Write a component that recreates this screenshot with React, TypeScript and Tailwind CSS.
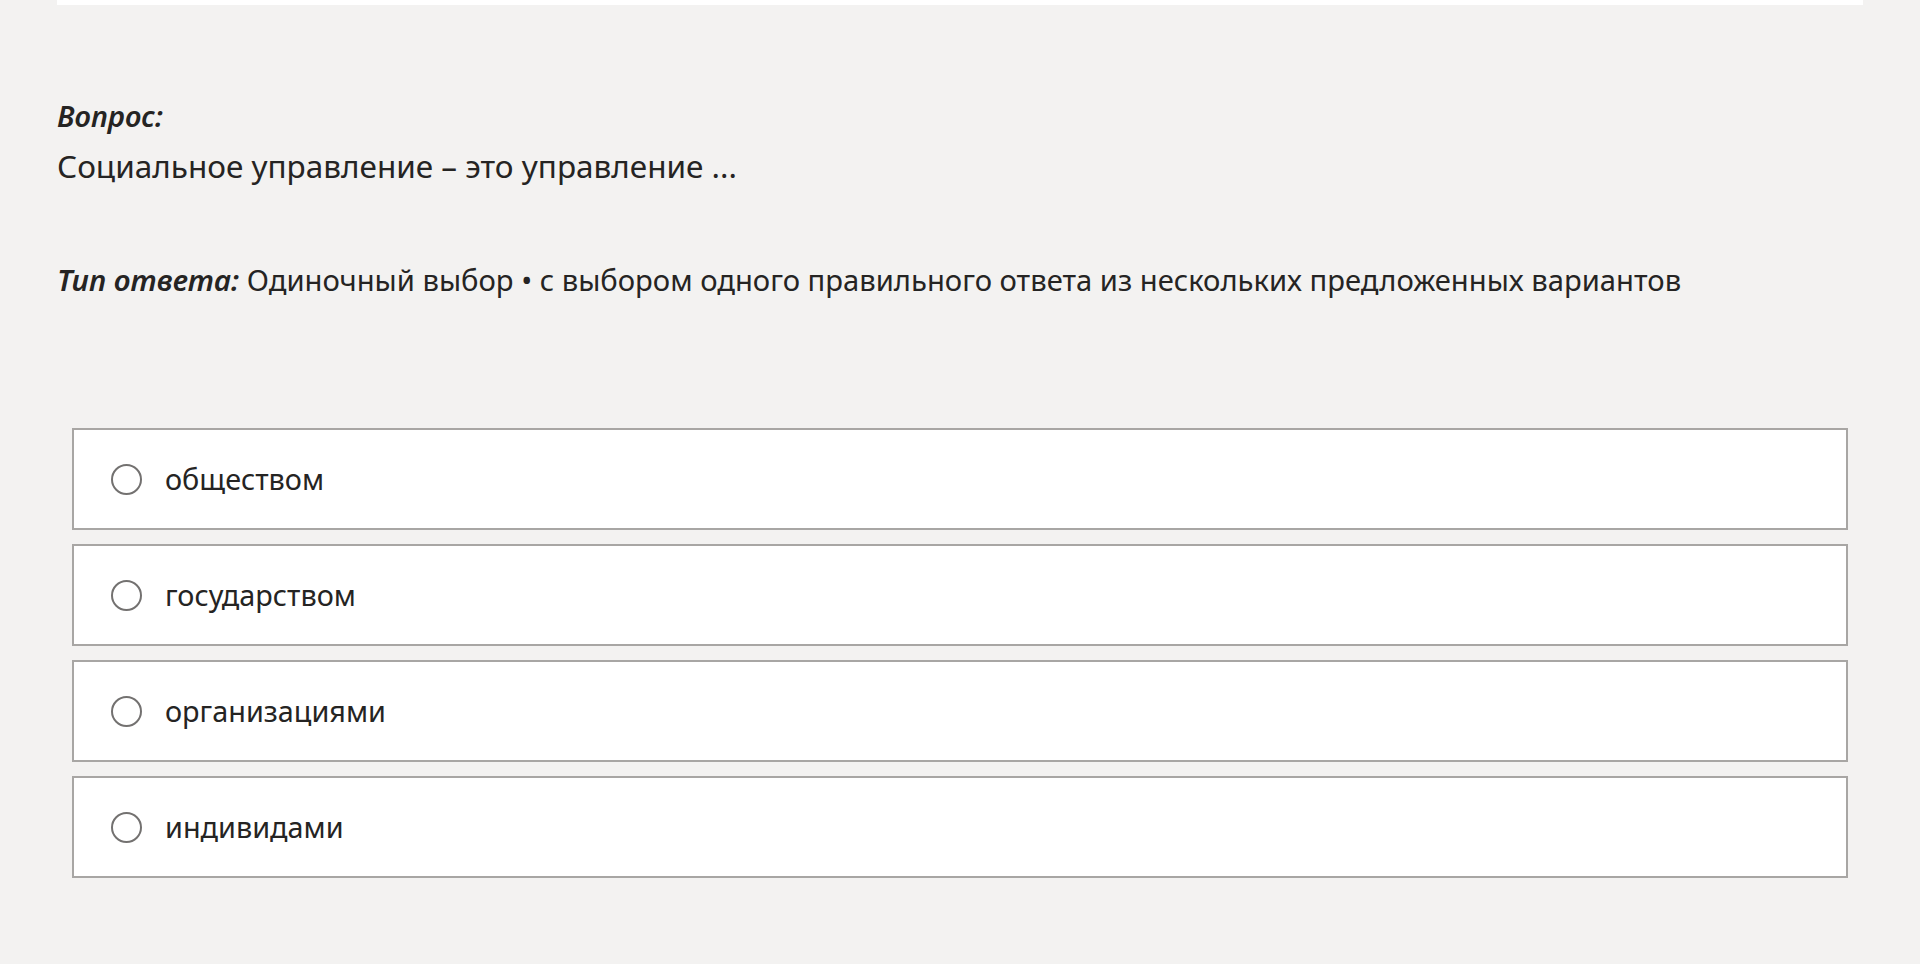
import { useState } from 'react';

const options = ['обществом', 'государством', 'организациями', 'индивидами'];

export default function App() {
    const [selected, setSelected] = useState<number | null>(null);

    return (
        <div
            className="min-h-screen bg-[#f3f2f1] text-[#252423]"
            style={{ fontFamily: '"Noto Sans", "Open Sans", sans-serif' }}
        >
            <div className="mx-[57px]">
                {/* Previous card edge */}
                <div className="h-[5px] bg-white" />

                {/* Question */}
                <div className="pt-[93px]">
                    <p className="text-[29px] leading-[36px] font-semibold italic">Вопрос:</p>
                    <p className="mt-[12px] text-[31.5px] leading-[40px]">Социальное управление – это управление ...</p>
                </div>

                {/* Answer type */}
                <p className="mt-[74px] text-[29.2px] leading-[40px]">
                    <span className="text-[29.6px] font-semibold italic">Тип ответа:</span> Одиночный выбор • с выбором одного правильного ответа из нескольких предложенных вариантов
                </p>

                {/* Options */}
                <div className="mt-[128px] mx-[15px] flex flex-col gap-[14px]">
                    {options.map((opt, i) => (
                        <button
                            key={opt}
                            onClick={() => setSelected(i)}
                            className="h-[102px] flex items-center bg-white border-2 border-[#a8a6a4] text-left"
                        >
                            <span className="ml-[37px] w-[31px] h-[31px] rounded-full border-2 border-[#737170] flex items-center justify-center">
                                {selected === i && <span className="w-[15px] h-[15px] rounded-full bg-[#252423]" />}
                            </span>
                            <span className="ml-[23px] text-[28.8px] leading-[40px]">{opt}</span>
                        </button>
                    ))}
                </div>
            </div>
        </div>
    );
}
